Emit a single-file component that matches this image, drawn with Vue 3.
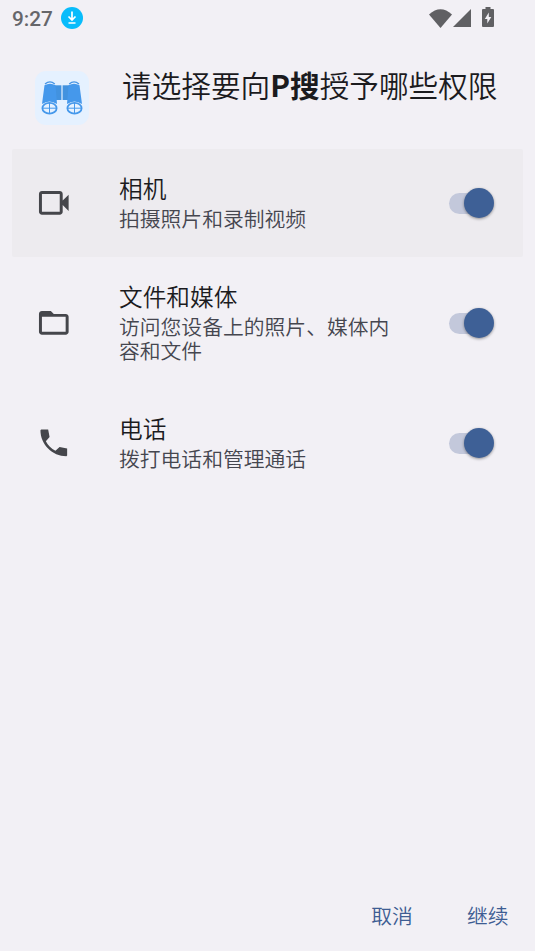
<script setup>
const permissions = [
  { id: 'camera', title: '相机', desc: '拍摄照片和录制视频', active: true,
    icon: 'M4 20q-.825 0-1.412-.587T2 18V6q0-.825.588-1.412T4 4h12q.825 0 1.413.588T18 6v4.5l4-4v11l-4-4V18q0 .825-.587 1.413T16 20zm0-2h12V6H4z' },
  { id: 'files', title: '文件和媒体', desc: '访问您设备上的照片、媒体内容和文件', active: false,
    icon: 'M4 20q-.825 0-1.412-.587T2 18V6q0-.825.588-1.412T4 4h6l2 2h8q.825 0 1.413.588T22 8v10q0 .825-.587 1.413T20 20zm0-2h16V8H4z' },
  { id: 'phone', title: '电话', desc: '拨打电话和管理通话', active: false,
    icon: 'M21 15.900l-5.100-1-2.800 2.450c-2.800-1.440-5-3.650-6.450-6.450l2.500-2.750L8.200 3H3.500L3 3.500C3 13 11 21 20.500 21l.5-.5z' },
]
</script>

<template>
  <main class="screen">
    <header class="status">
      <span class="time">9:27</span>
      <svg class="download" viewBox="0 0 22 22">
        <circle cx="11" cy="11" r="11" fill="#08bcfb" />
        <path d="M11 4.500v8M7.500 9.500l3.500 3.500 3.500-3.500M7.500 16h7" fill="none" stroke="#fff" stroke-width="1.700" />
      </svg>
      <span class="grow"></span>
      <svg class="wifi" viewBox="0 0 23 19"><path d="M0 5.500Q11.500-5 23 5.500L11.500 19z" /></svg>
      <svg class="signal" viewBox="0 0 18 18"><path d="M18 0v18H0z" /></svg>
      <svg class="battery" viewBox="0 0 12 20">
        <path d="M3.500 0h5v2H11q1 0 1 1v16q0 1-1 1H1q-1 0-1-1V3q0-1 1-1h2.500z" />
        <path class="bolt" d="M6.800 5.500L2.800 12h2.500v4.500L9.300 10H6.800z" />
      </svg>
    </header>

    <section class="heading">
      <svg class="app-icon" viewBox="0 0 54 54">
        <rect width="54" height="54" rx="11" fill="#e5f1ff" />
        <path d="M20 14.300h14v14.700H20z" fill="#4292df" />
        <path d="M27 13v17" stroke="#e5f1ff" stroke-width="1.200" />
        <g v-for="side in ['left', 'right']" :key="side" :transform="side === 'right' ? 'translate(54 0) scale(-1 1)' : undefined">
          <path d="M10 13Q15 8.800 19.800 13" fill="none" stroke="#4695e5" stroke-width="1.300" />
          <path d="M9.500 14.300Q15 11.300 20.500 14.300L22 33Q14.500 28 7 33z" fill="#4598eb" />
          <ellipse cx="14.500" cy="37.200" rx="7.100" ry="5.400" fill="#e5f1ff" stroke="#4598eb" stroke-width="1.800" />
          <path d="M14.500 32v10.500M7.500 37.200h14" stroke="#4598eb" stroke-width="1" />
        </g>
      </svg>
      <h1>请选择要向<b>P搜</b>授予哪些权限</h1>
    </section>

    <ul class="list">
      <li v-for="p in permissions" :key="p.id" class="row" :class="{ active: p.active }">
        <svg class="row-icon" viewBox="0 0 24 24"><path :d="p.icon" /></svg>
        <div class="copy">
          <h2>{{ p.title }}</h2>
          <p>{{ p.desc }}</p>
        </div>
        <span class="switch"><span class="thumb"></span></span>
      </li>
    </ul>

    <footer class="actions">
      <button type="button">取消</button>
      <button type="button">继续</button>
    </footer>
  </main>
</template>

<style>
body { background: #f2f0f5; }
</style>

<style scoped>
.screen {
  box-sizing: border-box;
  width: 535px;
  height: 951px;
  display: flex;
  flex-direction: column;
  background: #f2f0f5;
  color: #1b1b1e;
  font-family: "Noto Sans CJK SC", sans-serif;
  font-weight: 350;
  overflow: hidden;
}
.status {
  display: flex;
  align-items: center;
  height: 36px;
  padding: 0 41px 0 12px;
}
.time {
  width: 49px;
  padding-top: 1px;
  font: 500 20.800px/36px Roboto, sans-serif;
  color: #66666a;
}
.download { width: 22px; height: 22px; }
.grow { flex: 1; }
.status svg { display: block; flex: none; }
.wifi, .signal, .battery { fill: #606063; }
.wifi { width: 23px; height: 19px; }
.signal { width: 18px; height: 18px; margin-left: 1px; }
.battery { width: 12px; height: 20px; margin: 0 0 2px 11px; }
.bolt { fill: #f2f0f5; }
.heading {
  display: flex;
  height: 113px;
  padding: 0 0 0 35px;
}
.app-icon { width: 54px; height: 54px; margin-top: 35px; }
h1 {
  margin: 27px 0 0 33px;
  font-size: 29.650px;
  line-height: 44px;
  font-weight: 350;
  white-space: nowrap;
}
h1 b { font-weight: 700; }
.list { margin: 0; padding: 0 12px; list-style: none; }
.row {
  box-sizing: border-box;
  display: flex;
  align-items: center;
  min-height: 108px;
  padding: 23px 29px 23px 23.700px;
}
.active { background: #edebef; border-radius: 2px; }
.row-icon { width: 35.600px; height: 35.600px; fill: #45464b; flex: none; }
.copy { width: 282px; margin-left: 47.700px; padding-bottom: 2px; }
h2 {
  margin: 0;
  font-size: 23.700px;
  line-height: 32px;
  font-weight: 350;
}
p {
  margin: 0;
  font-size: 20.800px;
  line-height: 24px;
  padding: 2px 0;
  color: #45464f;
}
.switch {
  display: flex;
  justify-content: flex-end;
  align-items: center;
  box-sizing: border-box;
  width: 45px;
  height: 21px;
  margin-left: auto;
  border-radius: 11px;
  background: linear-gradient(90deg, #c3c8db 35px, transparent 35px);
}
.thumb {
  width: 30px;
  height: 30px;
  border-radius: 50%;
  background: #3e6096;
  box-shadow: 0 1px 3px rgba(0, 0, 0, 0.4);
}
.actions {
  display: flex;
  justify-content: flex-end;
  gap: 54px;
  margin-top: auto;
  padding: 0 26.500px 20px 0;
}
button {
  padding: 0;
  border: 0;
  background: none;
  font: 350 20.800px/32px "Noto Sans CJK SC", sans-serif;
  color: #3e5d93;
}
</style>
